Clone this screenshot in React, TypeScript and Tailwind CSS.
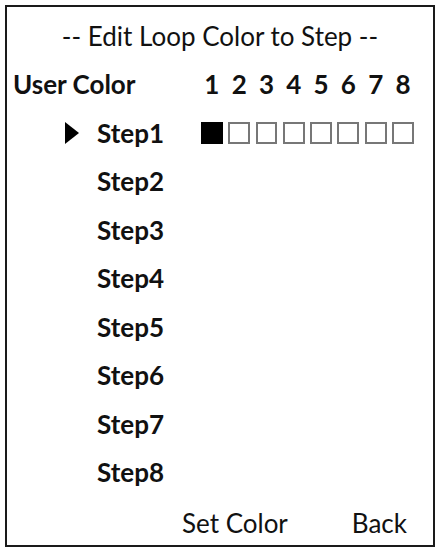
import React from 'react';

const steps = ['Step1', 'Step2', 'Step3', 'Step4', 'Step5', 'Step6', 'Step7', 'Step8'];
const slots = [1, 2, 3, 4, 5, 6, 7, 8];

// --- 한 줄 높이: 모든 줄이 같은 간격 ---
const Row: React.FC<{ children: React.ReactNode; className?: string }> = ({ children, className = '' }) => (
  <div className={`h-[48.5px] flex items-center shrink-0 ${className}`}>{children}</div>
);

const App: React.FC = () => {
  const selected = 0;
  const filled = [true, false, false, false, false, false, false, false];

  return (
    <div className="w-[440px] h-[552px] bg-white p-[5px] text-[#111]" style={{ fontFamily: 'Lato, "Open Sans", sans-serif' }}>
      <div className="h-full w-full border-2 border-[#1a1a1a] flex flex-col pt-[5px]">
        <Row className="justify-center">
          <span className="text-[26px]">-- Edit Loop Color to Step --</span>
        </Row>

        <Row>
          <span className="text-[26px] font-bold pl-[6px] w-[194px] shrink-0">User Color</span>
          <div className="flex gap-[5.5px]">
            {slots.map(n => (
              <span key={n} className="w-[21.8px] text-center text-[26px] font-bold">{n}</span>
            ))}
          </div>
        </Row>

        {steps.map((s, i) => (
          <Row key={s}>
            <div className="w-[90px] pl-[58px] shrink-0 flex items-center">
              {i === selected && (
                <svg width="14" height="22" viewBox="0 0 14 22" className="shrink-0">
                  <polygon points="0,0 14,11 0,22" fill="#000" />
                </svg>
              )}
            </div>
            <span className="w-[104px] shrink-0 text-[26px] font-bold">{s}</span>
            {i === selected && (
              <div className="flex gap-[5.5px]">
                {filled.map((f, j) => (
                  <div
                    key={j}
                    className={f ? 'w-[21.8px] h-[21.8px] bg-black' : 'w-[21.8px] h-[21.8px] border-2 border-[#777]'}
                  />
                ))}
              </div>
            )}
          </Row>
        ))}

        <Row className="pl-[175px] pt-[5px]">
          <span className="text-[26px]">Set Color</span>
          <span className="text-[26px] ml-[64px]">Back</span>
        </Row>
      </div>
    </div>
  );
};

export default App;
